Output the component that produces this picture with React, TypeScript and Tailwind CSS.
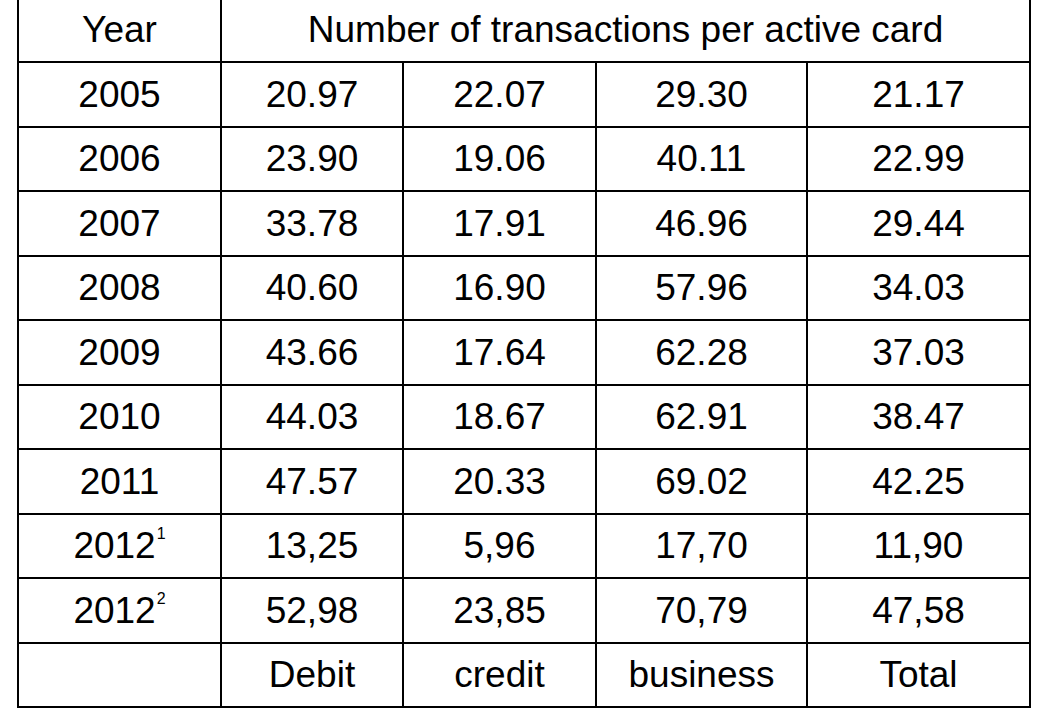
const rows: { year: string; sup?: string; values: string[] }[] = [
  { year: '2005', values: ['20.97', '22.07', '29.30', '21.17'] },
  { year: '2006', values: ['23.90', '19.06', '40.11', '22.99'] },
  { year: '2007', values: ['33.78', '17.91', '46.96', '29.44'] },
  { year: '2008', values: ['40.60', '16.90', '57.96', '34.03'] },
  { year: '2009', values: ['43.66', '17.64', '62.28', '37.03'] },
  { year: '2010', values: ['44.03', '18.67', '62.91', '38.47'] },
  { year: '2011', values: ['47.57', '20.33', '69.02', '42.25'] },
  { year: '2012', sup: '1', values: ['13,25', '5,96', '17,70', '11,90'] },
  { year: '2012', sup: '2', values: ['52,98', '23,85', '70,79', '47,58'] },
];

const cell = 'border-2 border-black text-center align-middle p-0';

const App = function() {
  return (
    <div className='w-[1044px] h-[715px] bg-white overflow-hidden text-black font-["Liberation_Sans",Arial,sans-serif] text-[37px] leading-none'>
      <table className='ml-[17px] w-[1014px] table-fixed border-collapse'>
        <colgroup>
          <col className='w-[203px]' />
          <col className='w-[182px]' />
          <col className='w-[193px]' />
          <col className='w-[211px]' />
          <col className='w-[223px]' />
        </colgroup>
        <tbody>
          <tr className='h-[62px]'>
            <td className={`${cell} border-t-0 pb-[3px]`}>Year</td>
            <td className={`${cell} border-t-0 pb-[3px]`} colSpan={4}>Number of transactions per active card</td>
          </tr>
          {rows.map((row, i) => (
            <tr key={row.year + i} className='h-[64.5px]'>
              <td className={cell}>
                {row.year}
                {row.sup && <sup className='text-[16px] top-[-19px] ml-[1px]'>{row.sup}</sup>}
              </td>
              {row.values.map((v, j) => <td key={j} className={cell}>{v}</td>)}
            </tr>
          ))}
          <tr className='h-[64.5px]'>
            <td className={cell}></td>
            <td className={cell}>Debit</td>
            <td className={cell}>credit</td>
            <td className={cell}>business</td>
            <td className={cell}>Total</td>
          </tr>
        </tbody>
      </table>
    </div>
  );
};

export default App;
